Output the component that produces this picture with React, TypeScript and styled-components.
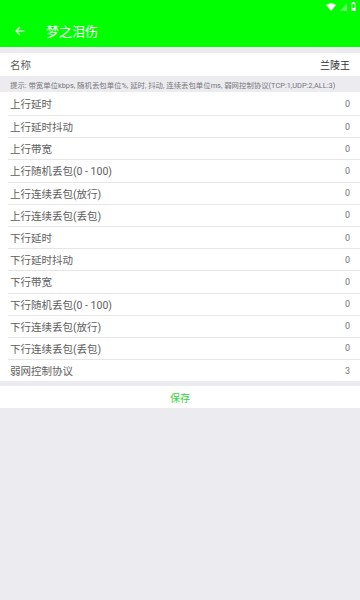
import styled, { createGlobalStyle } from "styled-components"

const GlobalStyle = createGlobalStyle`
  html, body {
    margin: 0;
    padding: 0;
    background: #ebebf0;
    font-family: Roboto, "Noto Sans CJK SC", sans-serif;
  }
  * { box-sizing: border-box; }
`

const Page = styled.div`
  width: 360px;
  min-height: 600px;
  background: #ebebf0;
  display: flex;
  flex-direction: column;
`

const Header = styled.div`
  background: #00ff00;
  height: 47px;
  position: relative;
  display: flex;
  align-items: flex-end;
`

const StatusIcons = styled.div`
  position: absolute;
  top: 2px;
  right: 4px;
  display: flex;
  align-items: center;
  gap: 4px;
`

const TitleBar = styled.div`
  height: 33px;
  display: flex;
  align-items: center;
  padding-left: 14px;
  gap: 20px;
  color: #fff;
  font-size: 13px;
`

const Section = styled.div<{ $top: number }>`
  background: #fff;
  margin-top: ${p => p.$top}px;
`

const Row = styled.div<{ $divider?: boolean; $height?: number }>`
  height: ${p => p.$height ?? 22}px;
  display: flex;
  align-items: center;
  justify-content: space-between;
  padding: 0 10px;
  font-size: 10.5px;
  color: #5e5e5e;
  border-top: ${p => (p.$divider ? "1px solid #e6e6e6" : "none")};
  margin-left: ${p => (p.$divider ? "8px" : "0")};
  padding-left: ${p => (p.$divider ? "2px" : "10px")};
`

const Value = styled.span<{ $dark?: boolean }>`
  font-size: ${p => (p.$dark ? "10px" : "9px")};
  color: ${p => (p.$dark ? "#333" : "#777")};
`

const Hint = styled.div`
  background: #ebebf0;
  height: 16px;
  display: flex;
  align-items: center;
  padding-left: 10px;
  font-size: 7.4px;
  color: #777;
  white-space: nowrap;
`

const SaveButton = styled.div`
  height: 22px;
  display: flex;
  align-items: center;
  justify-content: center;
  color: #33d633;
  font-size: 10px;
`

const rows: [string, string][] = [
  ["上行延时", "0"],
  ["上行延时抖动", "0"],
  ["上行带宽", "0"],
  ["上行随机丢包(0 - 100)", "0"],
  ["上行连续丢包(放行)", "0"],
  ["上行连续丢包(丢包)", "0"],
  ["下行延时", "0"],
  ["下行延时抖动", "0"],
  ["下行带宽", "0"],
  ["下行随机丢包(0 - 100)", "0"],
  ["下行连续丢包(放行)", "0"],
  ["下行连续丢包(丢包)", "0"],
  ["弱网控制协议", "3"],
]

export default function App() {
  return (
    <Page>
      <GlobalStyle />
      <Header>
        <StatusIcons>
          <svg width="10" height="8" viewBox="0 0 10 8">
            <path d="M0 2 Q5 -1.5 10 2 L5 8 Z" fill="#fff" />
          </svg>
          <svg width="7" height="8" viewBox="0 0 7 8">
            <path d="M7 0 L7 8 L0 8 Z" fill="rgba(255,255,255,0.4)" />
          </svg>
          <svg width="5" height="9" viewBox="0 0 5 9">
            <rect x="1.5" y="0" width="2" height="1" fill="#fff" />
            <rect x="0.5" y="1" width="4" height="8" rx="0.5" fill="#fff" />
            <rect x="1.3" y="2" width="2.4" height="4" fill="#00ff00" />
          </svg>
        </StatusIcons>
        <TitleBar>
          <svg width="12" height="12" viewBox="0 0 24 24" fill="none" stroke="#fff" strokeWidth="2.4" strokeLinecap="round" strokeLinejoin="round">
            <path d="M20 12 H4" />
            <path d="M11 5 L4 12 L11 19" />
          </svg>
          <span>梦之泪伤</span>
        </TitleBar>
      </Header>
      <Section $top={6}>
        <Row $height={23}>
          <span>名称</span>
          <Value $dark>兰陵王</Value>
        </Row>
        <Hint>提示: 带宽单位kbps, 随机丢包单位%, 延时, 抖动, 连续丢包单位ms, 弱网控制协议(TCP:1,UDP:2,ALL:3)</Hint>
        {rows.map(([label, value], i) => (
          <Row key={label} $divider={i > 0} $height={i > 0 ? 22.2 : 23}>
            <span>{label}</span>
            <Value>{value}</Value>
          </Row>
        ))}
      </Section>
      <Section $top={5}>
        <SaveButton>保存</SaveButton>
      </Section>
    </Page>
  )
}
